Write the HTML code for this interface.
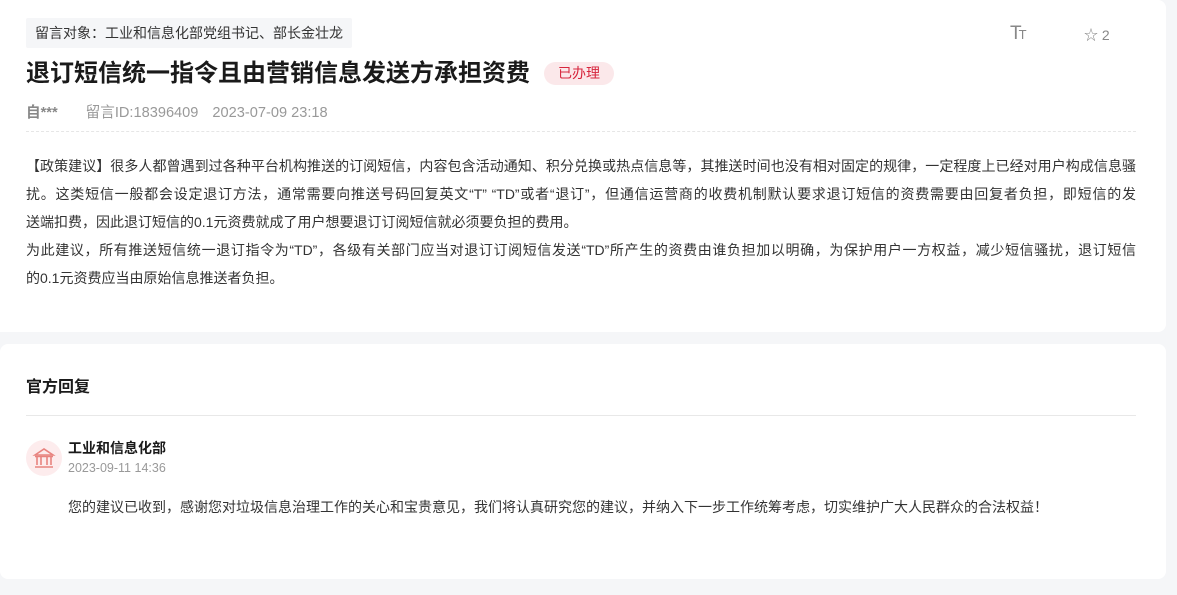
<!DOCTYPE html>
<html><head><meta charset="utf-8"><style>
*{margin:0;padding:0;box-sizing:border-box}
body{width:1177px;height:595px;background:#f5f6f8;font-family:"Liberation Sans","Noto Sans CJK SC",sans-serif;position:relative;overflow:hidden}
.card{position:absolute;left:0;width:1166px;background:#fff;border-radius:0 8px 8px 0}
.c1{top:0;height:332px}
.c2{top:344px;height:235px;border-radius:8px}
.tag{position:absolute;left:26px;top:18px;height:30px;padding:0 9px;background:#f5f6f8;color:#333;font-size:14px;line-height:30px;border-radius:2px}
h1{position:absolute;left:26px;top:58px;font-size:24px;font-weight:bold;color:#1a1a1a;line-height:32px}
.badge{position:absolute;left:544px;top:62px;width:70px;height:23px;border-radius:12px;background:#fbe8ea;color:#d7263d;font-size:14px;line-height:23px;text-align:center}
.meta{position:absolute;left:26px;top:104px;font-size:14.6px;color:#999;line-height:18px}
.meta b{color:#888;margin-right:28px}
.meta span{margin-right:14px}
.dash{position:absolute;left:26px;top:131px;width:1110px;border-top:1px dashed #e6e6e6}
.tt{position:absolute;left:1010px;top:24px;color:#888;font-size:19px;line-height:20px;letter-spacing:-3px}
.tt small{font-size:13px}
.star{position:absolute;left:1084px;top:26px;color:#888;font-size:14px;line-height:18px}
.body{position:absolute;left:26px;top:152px;width:1110px;font-size:14px;color:#333;line-height:28px}
.body div{white-space:nowrap}
.body .j{text-align:justify;text-align-last:justify}
h2{position:absolute;left:26px;top:373px;font-size:16px;font-weight:bold;color:#1a1a1a}
.line{position:absolute;left:26px;top:415px;width:1110px;border-top:1px solid #e8e8e8}
.av{position:absolute;left:26px;top:440px;width:36px;height:36px;border-radius:50%;background:#fdeced}
.org{position:absolute;left:68px;top:438px;font-size:14px;font-weight:bold;color:#1a1a1a}
.date{position:absolute;left:68px;top:461px;font-size:12.5px;color:#999}
.reply{position:absolute;left:68px;top:497px;font-size:14px;color:#333}
</style></head><body>
<div class="card c1">
<div class="tag">留言对象：工业和信息化部党组书记、部长金壮龙</div>
<div class="tt">T<small>T</small></div>
<div class="star">☆ 2</div>
<h1>退订短信统一指令且由营销信息发送方承担资费</h1>
<div class="badge">已办理</div>
<div class="meta"><b>自***</b><span>留言ID:18396409</span><span>2023-07-09 23:18</span></div>
<div class="dash"></div>
<div class="body">
<div class="j">【政策建议】很多人都曾遇到过各种平台机构推送的订阅短信，内容包含活动通知、积分兑换或热点信息等，其推送时间也没有相对固定的规律，一定程度上已经对用户构成信息骚</div>
<div class="j">扰。这类短信一般都会设定退订方法，通常需要向推送号码回复英文“T” “TD”或者“退订”，但通信运营商的收费机制默认要求退订短信的资费需要由回复者负担，即短信的发</div>
<div>送端扣费，因此退订短信的0.1元资费就成了用户想要退订订阅短信就必须要负担的费用。</div>
<div class="j">为此建议，所有推送短信统一退订指令为“TD”，各级有关部门应当对退订订阅短信发送“TD”所产生的资费由谁负担加以明确，为保护用户一方权益，减少短信骚扰，退订短信</div>
<div>的0.1元资费应当由原始信息推送者负担。</div>
</div>
</div>
<div class="card c2"></div>
<h2>官方回复</h2>
<div class="line"></div>
<div class="av"><svg width="36" height="36" viewBox="0 0 36 36"><g fill="none" stroke="#e8837f" stroke-width="1.6"><path d="M9 15 L18 9 L27 15 Z"/><path d="M11 17v8M15 17v8M21 17v8M25 17v8M9 27h18M9 16.5h18"/></g></svg></div>
<div class="org">工业和信息化部</div>
<div class="date">2023-09-11 14:36</div>
<div class="reply">您的建议已收到，感谢您对垃圾信息治理工作的关心和宝贵意见，我们将认真研究您的建议，并纳入下一步工作统筹考虑，切实维护广大人民群众的合法权益！</div>
</body></html>
